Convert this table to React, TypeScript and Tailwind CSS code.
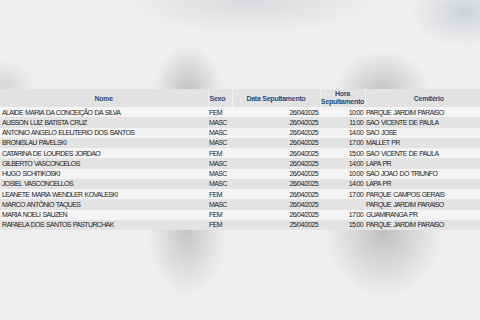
const rows = [
  ['ALAIDE MARIA DA CONCEIÇÃO DA SILVA', 'FEM', '26/04/2025', '10:00', 'PARQUE JARDIM PARAISO'],
  ['ALISSON LUIZ BATISTA CRUZ', 'MASC', '26/04/2025', '11:00', 'SAO VICENTE DE PAULA'],
  ['ANTONIO ANGELO ELEUTERIO DOS SANTOS', 'MASC', '26/04/2025', '14:00', 'SAO JOSE'],
  ['BRONISLAU PAVELSKI', 'MASC', '26/04/2025', '17:00', 'MALLET PR'],
  ['CATARINA DE LOURDES JORDAO', 'FEM', '26/04/2025', '15:00', 'SAO VICENTE DE PAULA'],
  ['GILBERTO VASCONCELOS', 'MASC', '26/04/2025', '14:00', 'LAPA PR'],
  ['HUGO SCHITIKOSKI', 'MASC', '26/04/2025', '10:00', 'SAO JOAO DO TRIUNFO'],
  ['JOSIEL VASCONCELLOS', 'MASC', '26/04/2025', '14:00', 'LAPA PR'],
  ['LEANETE MARIA WENDLER KOVALESKI', 'FEM', '26/04/2025', '17:00', 'PARQUE CAMPOS GERAIS'],
  ['MARCO ANTÔNIO TAQUES', 'MASC', '26/04/2025', '', 'PARQUE JARDIM PARAISO'],
  ['MARIA NOELI SAUZEN', 'FEM', '26/04/2025', '17:00', 'GUAMIRANGA PR'],
  ['RAFAELA DOS SANTOS PASTURCHAK', 'FEM', '25/04/2025', '15:00', 'PARQUE JARDIM PARAISO'],
]

export default function App() {
  return (
    <div className="w-[480px] h-[320px] overflow-hidden bg-[#efefef] bg-[radial-gradient(ellipse_34px_45px_at_188px_90px,#c2c2c2,transparent),radial-gradient(ellipse_48px_42px_at_382px_92px,#c3c3c3,transparent),radial-gradient(ellipse_130px_35px_at_250px_0px,#d8dadd,transparent),radial-gradient(ellipse_55px_35px_at_465px_12px,#cfd3da,transparent),radial-gradient(ellipse_30px_25px_at_5px_85px,#d6d6d6,transparent),radial-gradient(ellipse_40px_65px_at_187px_232px,#c6c6c6,transparent),radial-gradient(ellipse_58px_65px_at_384px_232px,#c0c0c0,transparent)] pt-[89px] font-['Liberation_Sans',Arial,sans-serif]">
      <table className="w-[492px] table-fixed border-collapse text-[7px] leading-none text-[#1e1e1e]">
        <colgroup>
          <col className="w-[208px]" />
          <col className="w-[24px]" />
          <col className="w-[88px]" />
          <col className="w-[45px]" />
          <col className="w-[127px]" />
        </colgroup>
        <thead>
          <tr className="h-[18px] bg-[#e2e2e2] text-[#2b4a7c] font-bold tracking-[-0.25px]">
            <th className="text-center border-r border-[#f2f2f2]">Nome</th>
            <th className="text-left pl-[1px] border-r border-[#f2f2f2]">Sexo</th>
            <th className="text-center border-r border-[#f2f2f2]">Data Sepultamento</th>
            <th className="text-center border-r border-[#f2f2f2] leading-[8px]">
              Hora
              <br />
              Sepultamento
            </th>
            <th className="text-center">Cemitério</th>
          </tr>
        </thead>
        <tbody className="tracking-[-0.65px] [word-spacing:0.8px]">
          {rows.map((r, i) => (
            <tr key={i} className={i % 2 === 0 ? 'h-[10.25px] bg-[#f4f4f4]' : 'h-[10.25px] bg-[#e3e3e3]'}>
              <td className="pl-[2px] whitespace-nowrap">{r[0]}</td>
              <td className="pl-[1px]">{r[1]}</td>
              <td className="text-right pr-[2px]">{r[2]}</td>
              <td className="text-right pr-[2px]">{r[3]}</td>
              <td className="pl-[1px] whitespace-nowrap">{r[4]}</td>
            </tr>
          ))}
        </tbody>
      </table>
    </div>
  )
}
